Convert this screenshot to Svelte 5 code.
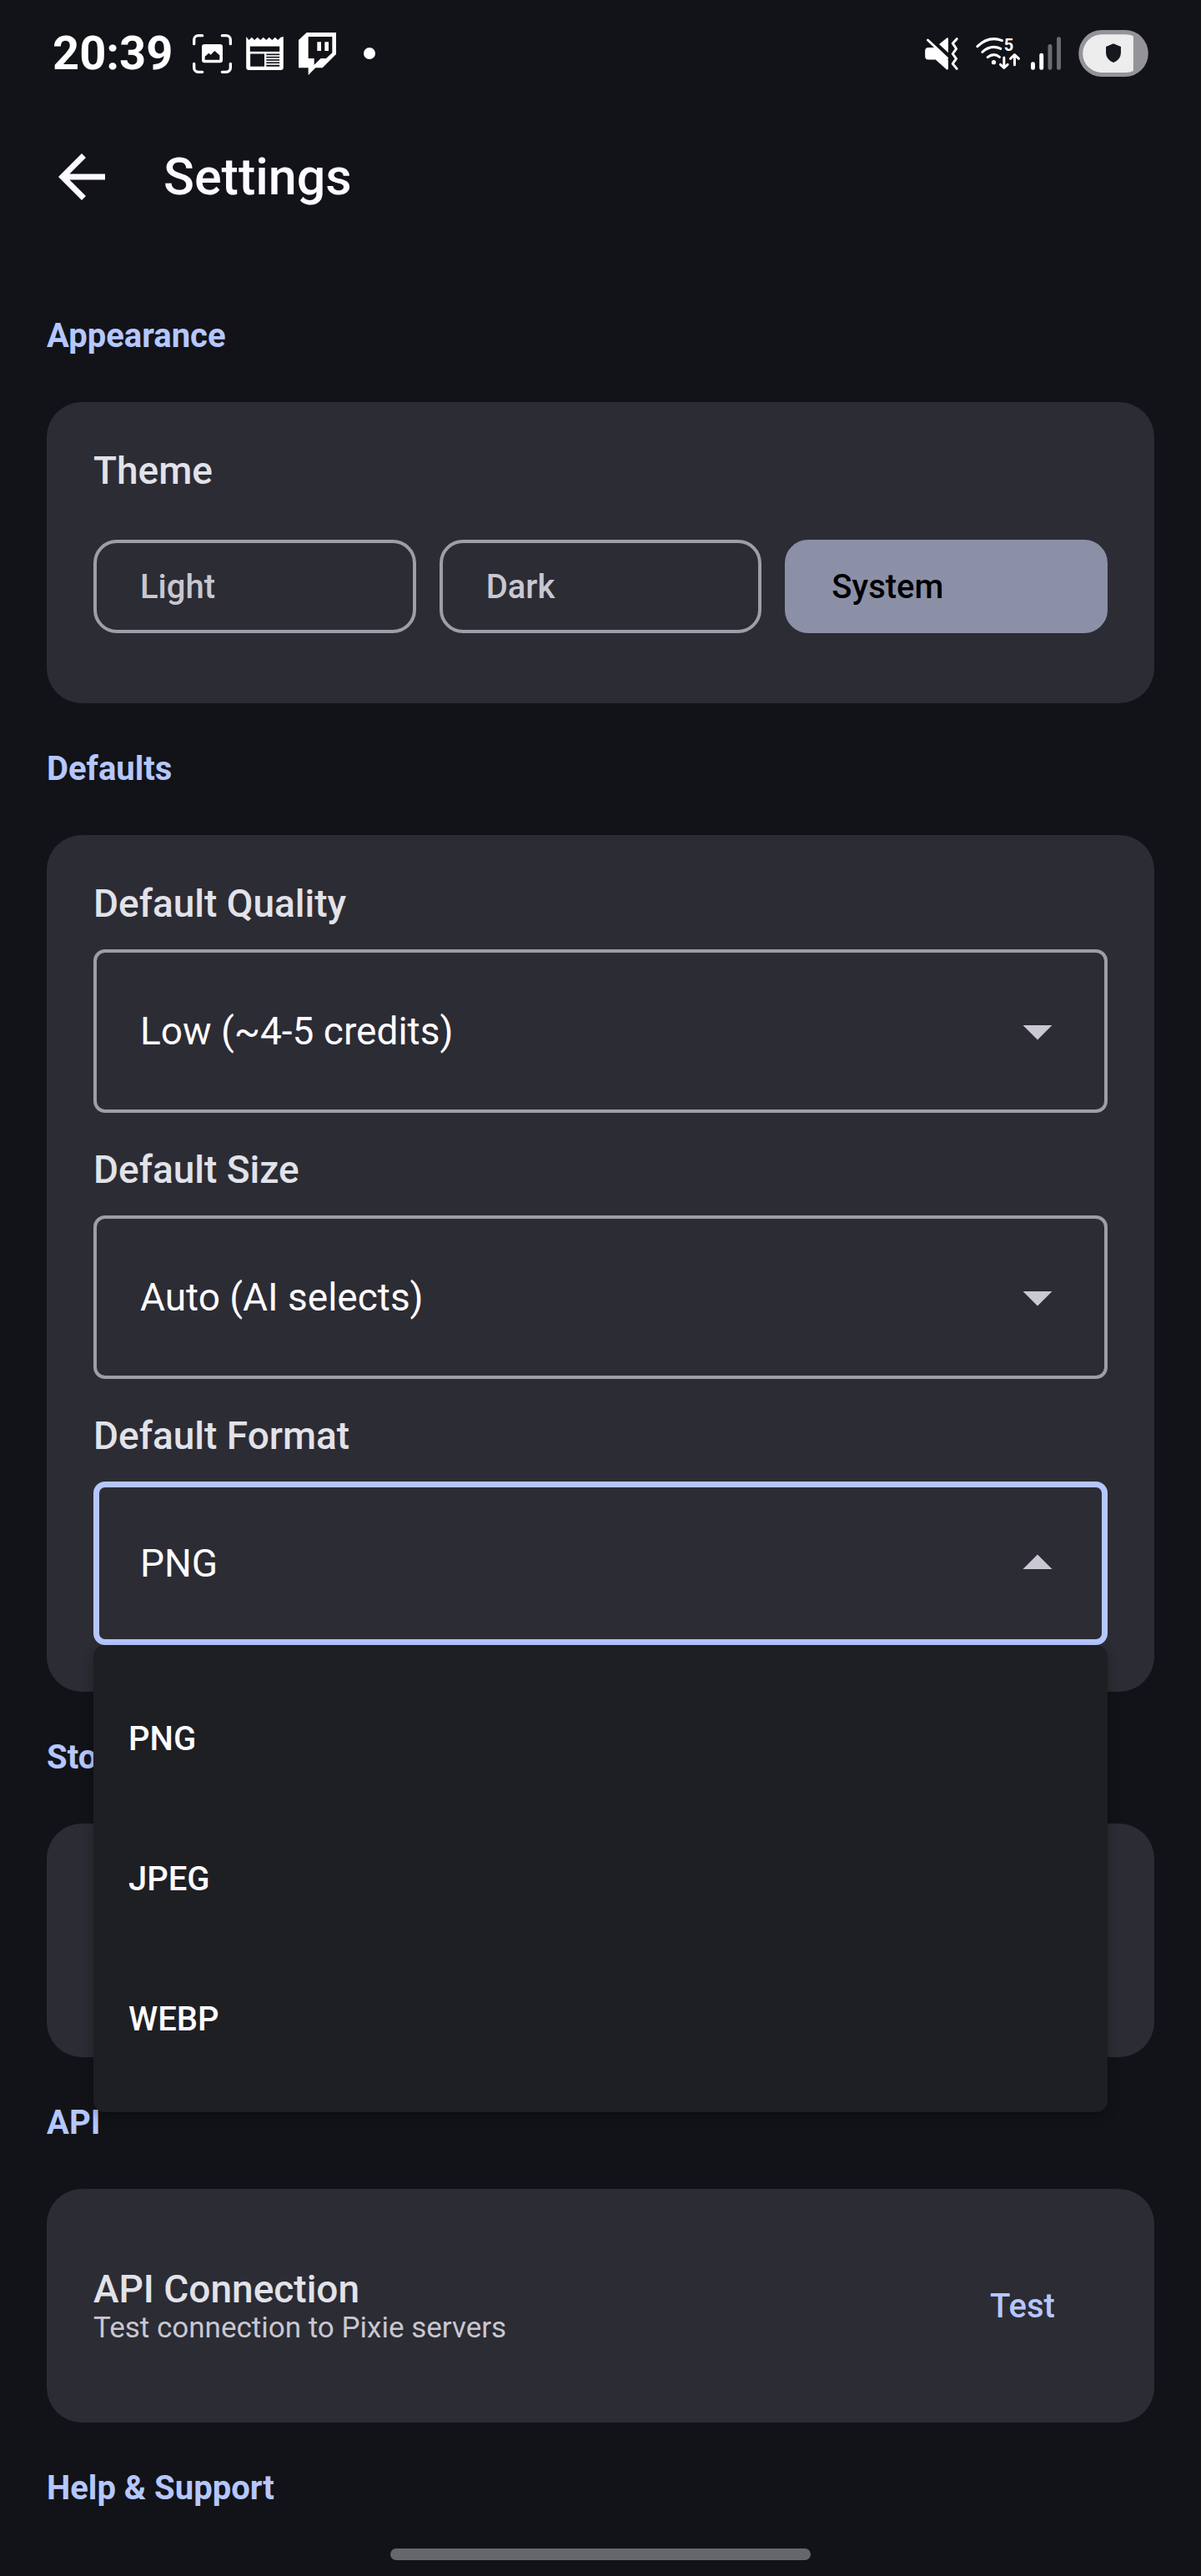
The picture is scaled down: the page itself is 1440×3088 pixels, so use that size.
<script>

  //: Variables

  let theme = 'System';
  let openField = 'format';

  const themes = ['Light', 'Dark', 'System'];

  let fields = [
    {
      id: 'quality',
      label: 'Default Quality',
      value: 'Low (~4-5 credits)',
      options: ['Low (~4-5 credits)']
    },
    {
      id: 'size',
      label: 'Default Size',
      value: 'Auto (AI selects)',
      options: ['Auto (AI selects)']
    },
    {
      id: 'format',
      label: 'Default Format',
      value: 'PNG',
      options: ['PNG', 'JPEG', 'WEBP']
    }
  ];

  //: Functions

  // the native popup is replaced by our own menu
  const toggleMenu = (e, id) => {
    e.preventDefault();
    openField = openField == id ? '' : id;
  }

  const pick = (i, option) => {
    fields[i].value = option;
    openField = '';
  }
</script>

<div class="screen">
  <div class="status">
    <div class="status-left">
      <span class="time">20:39</span>
      <svg class="i-shot" viewBox="0 0 141 141" width="47" height="47">
        <g fill="none" stroke="#fff" stroke-width="10" stroke-linecap="round">
          <path d="M5 35V20A15 15 0 0 1 20 5H35" />
          <path d="M106 5H121A15 15 0 0 1 136 20V35" />
          <path d="M136 106V121A15 15 0 0 1 121 136H106" />
          <path d="M35 136H20A15 15 0 0 1 5 121V106" />
        </g>
        <rect x="33" y="36" width="75" height="67" rx="10" fill="#fff" />
        <path d="M44 92V80L58 68L65 74L79 60L97 76V92Z" fill="#121318" />
      </svg>
      <svg class="i-news" viewBox="0 0 135 121" width="45" height="40">
        <path d="M0 0L10 12L20 2L30 12L41 2L52 12L62 2L73 12L83 2L94 12L105 2L115 12L125 2L135 0V111Q135 121 125 121H10Q0 121 0 111Z" fill="#fff" />
        <g fill="#121318">
          <rect x="14" y="35" width="107" height="19" />
          <rect x="15" y="62" width="51" height="46" />
          <rect x="73" y="62" width="48" height="5" />
          <rect x="73" y="72" width="48" height="5" />
          <rect x="73" y="82" width="48" height="5" />
          <rect x="73" y="92" width="48" height="5" />
          <rect x="73" y="102" width="48" height="6" />
        </g>
      </svg>
      <svg class="i-chat" viewBox="0 0 135 153" width="45" height="51">
        <path fill="#fff" fill-rule="evenodd" d="M29 0H135V78L86 127H61L35 153V127H0V27ZM35 15V93H56V116L80 93H99L121 73V15Z" />
        <path fill="#fff" d="M67 34H81V66H67ZM94 34H108V66H94Z" />
      </svg>
      <span class="dot"></span>
    </div>
    <div class="status-right">
      <svg viewBox="0 0 120 118" width="40" height="39">
        <path fill="#fff" d="M12 36H34L84 82V113Q83 119 77 115L38 80H12Q0 80 0 68V48Q0 36 12 36Z" />
        <path fill="#fff" d="M51 24L78 2Q84 -2 84 5V55Z" />
        <g fill="none" stroke="#fff" stroke-width="9" stroke-linecap="round" stroke-linejoin="round">
          <path d="M10 9L80 75" />
          <path d="M115 5L100 21L111 37L113 41L100 59L113 77L100 95L115 113" />
        </g>
      </svg>
      <svg class="i-wifi" viewBox="0 0 158 114" width="53" height="38">
        <g fill="none" stroke="#fff" stroke-width="9" stroke-linecap="round" stroke-linejoin="round">
          <path d="M5 32Q47 -8 94 11" />
          <path d="M23 52Q54 24 89 40" />
          <path d="M42 71Q64 53 85 70" />
          <path d="M101 72V108M88 97L101 109L114 97" />
          <path d="M139 98V63M124 76L139 62L154 76" />
        </g>
        <circle cx="64" cy="89" r="8" fill="#fff" />
        <text x="101" y="47" class="band">5</text>
      </svg>
      <svg class="i-signal" viewBox="0 0 109 120" width="36" height="40">
        <rect x="0" y="91" width="15" height="29" rx="7" fill="#fff" />
        <rect x="31" y="59" width="15" height="61" rx="7" fill="#fff" />
        <rect x="62" y="27" width="15" height="93" rx="7" fill="#6b6c70" />
        <rect x="94" y="0" width="15" height="120" rx="7" fill="#6b6c70" />
      </svg>
      <svg viewBox="0 0 252 169" width="84" height="56">
        <rect width="252" height="169" rx="84" fill="#949498" />
        <path d="M84 16H170Q186 16 198 22V148Q186 154 170 154H84A69 69 0 0 1 84 16Z" fill="#ededee" />
        <path d="M126 49L153 60V82Q153 106 126 118Q99 106 99 82V60Z" fill="#17181d" />
      </svg>
    </div>
  </div>

  <header>
    <button class="back" aria-label="Back">
      <svg viewBox="0 0 24 24" width="84" height="84">
        <path fill="#fdfbff" d="M20 11H7.83l5.59-5.59L12 4l-8 8 8 8 1.41-1.41L7.83 13H20v-2z" />
      </svg>
    </button>
    <h1>Settings</h1>
  </header>

  <main>
    <h2>Appearance</h2>
    <section class="card appearance">
      <h3>Theme</h3>
      <div class="themes">
        {#each themes as name}
          <button class="{theme==name?'active':''}" aria-pressed={theme==name} on:click={()=>{theme=name}}>
            {name}
          </button>
        {/each}
      </div>
    </section>

    <h2>Defaults</h2>
    <section class="card fields">
      {#each fields as field, i}
        <div class="field">
          <label for={field.id}>{field.label}</label>
          <div class="box">
            <select id={field.id} class="{openField==field.id?'open':''}" bind:value={field.value} on:mousedown={(e)=>{toggleMenu(e, field.id)}}>
              {#each field.options as option}
                <option>{option}</option>
              {/each}
            </select>
            <svg class="arrow" viewBox="0 0 24 24" width="84" height="84">
              <path fill="#cac9d3" d={openField==field.id ? 'M7 14l5-5 5 5z' : 'M7 10l5 5 5-5z'} />
            </svg>
            {#if openField==field.id}
              <div class="menu">
                {#each field.options as option}
                  <button on:click={()=>{pick(i, option)}}>{option}</button>
                {/each}
              </div>
            {/if}
          </div>
        </div>
      {/each}
    </section>

    <h2>Storage</h2>
    <section class="card">
      <div class="row"></div>
    </section>

    <h2>API</h2>
    <section class="card">
      <div class="row">
        <div>
          <h3>API Connection</h3>
          <p>Test connection to Pixie servers</p>
        </div>
        <button class="test">Test</button>
      </div>
    </section>

    <h2>Help &amp; Support</h2>
  </main>

  <div class="gesture"></div>
</div>

<style>
  :global(body) {
    margin: 0;
    background: #121318;
  }
  .screen {
    display: flow-root;
    padding-bottom: 19px;
    background: #121318;
    color: #e2e2e9;
    font-family: Roboto, sans-serif;
  }
  button, select {
    font-family: inherit;
    cursor: pointer;
  }
  h1, h2, h3, p {
    margin: 0;
  }
  svg {
    display: block;
    flex: none;
    overflow: visible;
  }

  /* status bar */
  .status {
    display: flex;
    justify-content: space-between;
    align-items: center;
    height: 128px;
    padding: 0 63px;
  }
  .status-left, .status-right {
    display: flex;
    align-items: center;
  }
  .time {
    color: #fff;
    font-size: 56px;
    line-height: 64px;
    font-weight: 700;
    margin-right: 24px;
  }
  .i-shot {
    margin-right: 17px;
  }
  .i-news {
    margin-right: 18px;
  }
  .i-chat {
    margin-right: 33px;
  }
  .dot {
    width: 14px;
    height: 14px;
    border-radius: 50%;
    background: #fff;
  }
  .i-wifi {
    margin-left: 21px;
    margin-right: 13px;
  }
  .i-signal {
    margin-right: 21px;
  }
  .band {
    fill: #fff;
    font-size: 60px;
    font-weight: 700;
  }

  /* app bar */
  header {
    display: flex;
    align-items: center;
    height: 168px;
    padding: 0 56px;
    gap: 56px;
  }
  .back {
    border: none;
    background: none;
    padding: 0;
  }
  h1 {
    color: #fdfbff;
    font-size: 61px;
    line-height: 76px;
    font-weight: 500;
  }

  /* sections */
  main {
    padding: 28px 56px 0;
  }
  h2 {
    color: #b5c7ff;
    font-size: 40px;
    line-height: 56px;
    font-weight: 700;
    padding: 51px 0;
  }
  h2:last-child {
    padding-bottom: 0;
  }
  .card {
    background: #2c2c34;
    border-radius: 42px;
    padding: 56px;
  }
  h3, label {
    display: block;
    color: #e2e2e9;
    font-size: 46px;
    line-height: 53px;
    font-weight: 500;
  }
  .appearance {
    padding-bottom: 84px;
  }
  .themes {
    display: grid;
    grid-template-columns: repeat(3, 1fr);
    gap: 28px;
    margin-top: 56px;
  }
  .themes button {
    height: 112px;
    padding: 0 52px;
    border: 4px solid #9e9da8;
    border-radius: 28px;
    background: none;
    color: #c8c7d1;
    font-size: 40px;
    font-weight: 500;
    text-align: left;
  }
  .themes button.active {
    background: #8b90a7;
    border-color: #8b90a7;
    color: #000;
  }
  .fields {
    display: flex;
    flex-direction: column;
    gap: 42px;
  }
  .box {
    position: relative;
    margin-top: 28px;
  }
  select {
    display: block;
    appearance: none;
    width: 100%;
    height: 196px;
    padding: 0 126px 0 52px;
    border: 4px solid #9e9da8;
    border-radius: 14px;
    outline: none;
    background: none;
    color: #fdfbff;
    font-size: 46px;
  }
  select.open {
    border: 7px solid #b5c7ff;
    padding-left: 49px;
  }
  .arrow {
    position: absolute;
    top: 56px;
    right: 42px;
    pointer-events: none;
  }
  .menu {
    position: absolute;
    top: 100%;
    left: 0;
    right: 0;
    z-index: 1;
    padding: 28px 0;
    border-radius: 14px;
    background: #1e1f23;
    box-shadow: 0 6px 14px rgba(0, 0, 0, 0.3);
  }
  .menu button {
    display: block;
    width: 100%;
    height: 168px;
    padding: 0 42px;
    border: none;
    background: none;
    color: #fdfbff;
    font-size: 40px;
    font-weight: 500;
    text-align: left;
  }
  .row {
    display: flex;
    justify-content: space-between;
    align-items: center;
    min-height: 168px;
  }
  p {
    color: #c8c7d1;
    font-size: 35px;
    line-height: 40px;
  }
  .test {
    min-width: 204px;
    height: 140px;
    border: none;
    background: none;
    color: #b5c7ff;
    font-size: 40px;
    font-weight: 500;
  }

  /* gesture bar */
  .gesture {
    width: 35%;
    height: 14px;
    margin: 44px auto 0;
    border-radius: 7px;
    background: #66676a;
  }
</style>
